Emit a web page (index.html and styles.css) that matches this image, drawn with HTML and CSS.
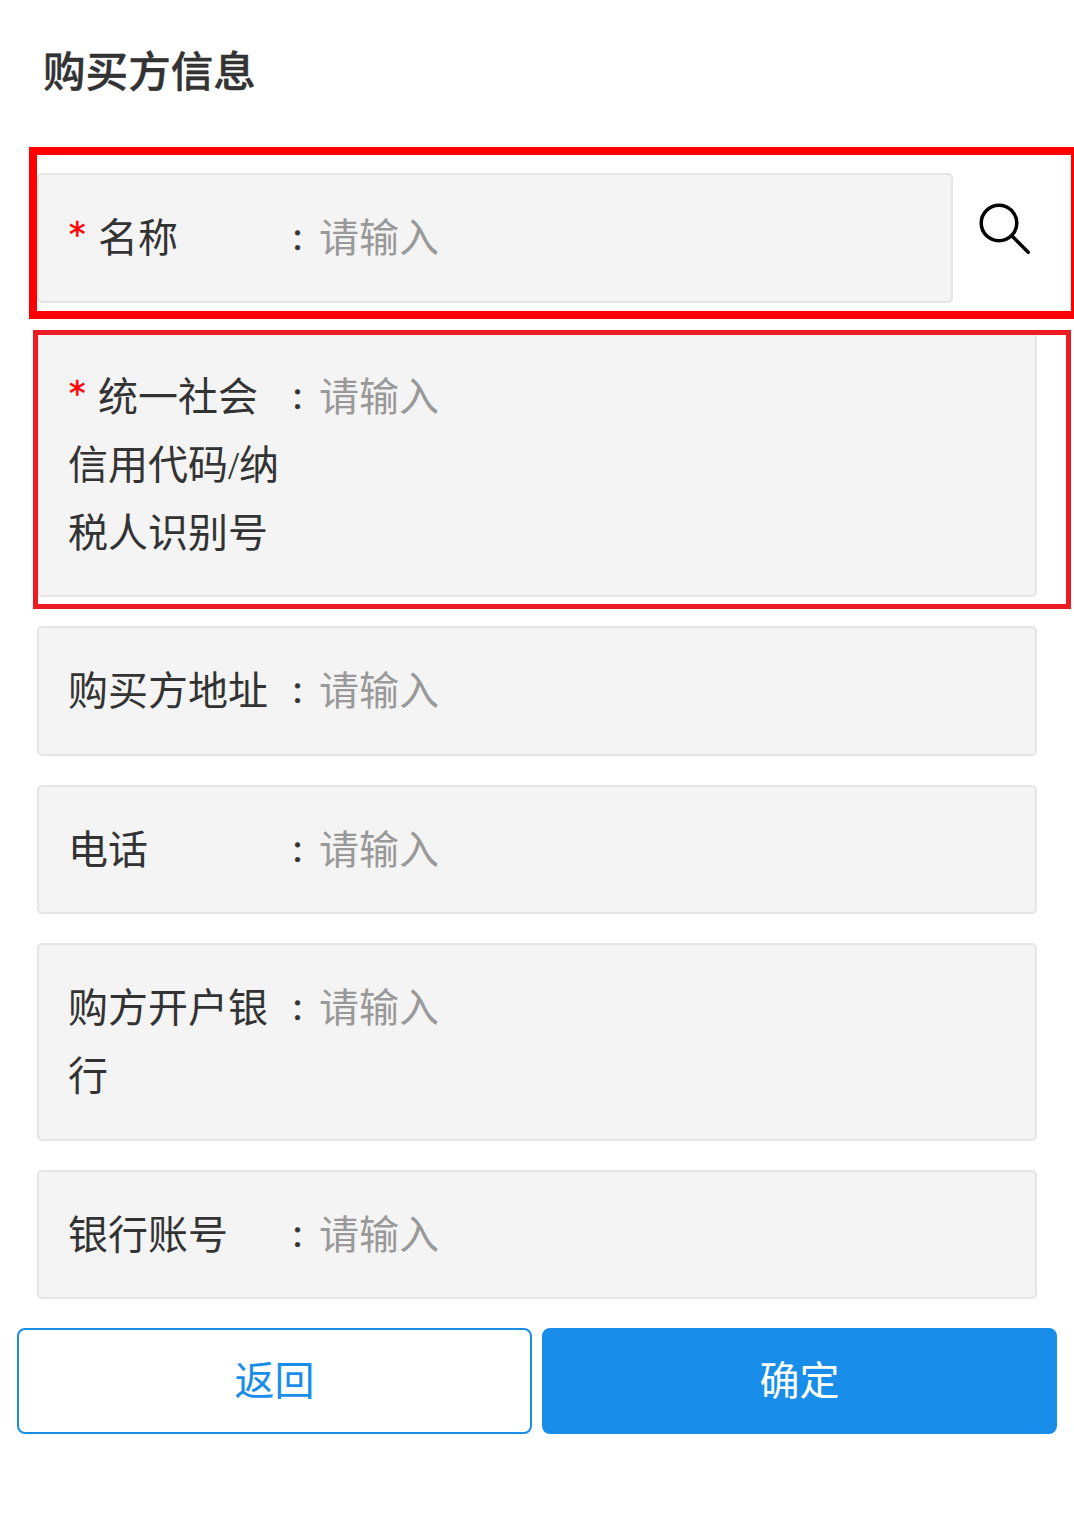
FILE: index.html
```html
<!DOCTYPE html>
<html lang="zh-CN">
<head>
    <meta charset="UTF-8">
    <meta name="viewport" content="width=device-width, initial-scale=1.0">
    <title>购买方信息</title>
    <link rel="stylesheet" href="styles.css">
</head>
<body>
    <h1 class="title">购买方信息</h1>

    <form class="form">
        <div class="row marked marked-name">
            <div class="field">
                <label class="label" for="name"><span class="required">*</span>名称</label>
                <span class="colon">:</span>
                <input id="name" class="input" type="text" placeholder="请输入">
            </div>
            <svg class="search-icon" viewBox="0 0 54 54">
                <circle cx="21" cy="21" r="17.8"/>
                <path d="M33.8 33.8L50.2 50.2"/>
            </svg>
        </div>

        <div class="row marked marked-tax">
            <div class="field">
                <label class="label" for="tax"><span class="required">*</span>统一社会信用代码/纳税人识别号</label>
                <span class="colon">:</span>
                <input id="tax" class="input" type="text" placeholder="请输入">
            </div>
        </div>

        <div class="row">
            <div class="field">
                <label class="label" for="address">购买方地址</label>
                <span class="colon">:</span>
                <input id="address" class="input" type="text" placeholder="请输入">
            </div>
        </div>

        <div class="row">
            <div class="field">
                <label class="label" for="phone">电话</label>
                <span class="colon">:</span>
                <input id="phone" class="input" type="text" placeholder="请输入">
            </div>
        </div>

        <div class="row">
            <div class="field">
                <label class="label" for="bank">购方开户银行</label>
                <span class="colon">:</span>
                <input id="bank" class="input" type="text" placeholder="请输入">
            </div>
        </div>

        <div class="row">
            <div class="field">
                <label class="label" for="account">银行账号</label>
                <span class="colon">:</span>
                <input id="account" class="input" type="text" placeholder="请输入">
            </div>
        </div>
    </form>

    <div class="buttons">
        <button class="btn" type="button">返回</button>
        <button class="btn btn-primary" type="button">确定</button>
    </div>
</body>
</html>
```
FILE: styles.css
```css
:root {
    --primary-color: #188dea;
    --text-color: #333;
}

*,
*::after {
    margin: 0;
    padding: 0;
    box-sizing: border-box;
}

body {
    background: #fff;
    color: var(--text-color);
    font-family: "Liberation Serif", "Noto Sans CJK SC", serif;
    font-size: 40px;
    line-height: 68px;
    overflow-x: hidden;
}

.title {
    padding: 39px 43px 0;
    height: 173px;
    font-size: 42.6px;
    font-weight: 500;
    -webkit-text-stroke: 0.4px var(--text-color);
}

.form {
    padding: 0 37px;
}

.row {
    position: relative;
    display: flex;
    margin-bottom: 29px;
}

.field {
    flex: 1;
    display: flex;
    align-items: flex-start;
    padding: 30px 29px 27.55px;
    border: 2px solid #e5e5e5;
    border-radius: 5px;
    background: #f4f4f4;
}

.label {
    width: 214px;
    word-break: break-all;
}

.required {
    display: inline-block;
    width: 30px;
    height: 40px;
    padding-left: 1px;
    vertical-align: top;
    font-family: "DejaVu Sans", sans-serif;
    font-size: 33px;
    line-height: 60px;
    color: #f00;
    -webkit-text-stroke: 0.6px #f00;
}

.colon {
    width: 37px;
    height: 68px;
    padding-left: 10px;
    line-height: 64px;
    -webkit-text-stroke: 0.5px var(--text-color);
}

.input {
    flex: 1;
    min-width: 0;
    height: 68px;
    border: none;
    outline: none;
    background: none;
    font: inherit;
}

.input::placeholder {
    color: #999;
}

.search-icon {
    width: 54px;
    height: 54px;
    margin: 29px 5px 0 25px;
    fill: none;
    stroke: #000;
    stroke-width: 3.5;
    stroke-linecap: round;
}

/* 红色标注框 */
.marked::after {
    content: "";
    position: absolute;
    pointer-events: none;
}

.marked-name::after {
    top: -26px;
    left: -8px;
    right: -37px;
    height: 172px;
    border: 8px solid #f00;
    border-right-width: 3px;
}

.marked-tax::after {
    top: -1.5px;
    left: -4px;
    right: -34px;
    height: 279px;
    border: 5px solid #ed1c24;
}

.buttons {
    display: flex;
    gap: 10px;
    padding: 0 17px;
}

.btn {
    flex: 1;
    height: 106px;
    padding-top: 2px;
    border: 2px solid var(--primary-color);
    border-radius: 8px;
    background: #fff;
    color: var(--primary-color);
    font: inherit;
}

.btn-primary {
    background: var(--primary-color);
    color: #fff;
}
```
